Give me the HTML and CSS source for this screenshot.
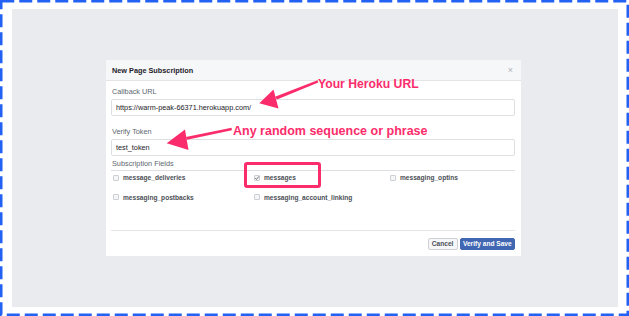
FILE: index.html
```html
<!DOCTYPE html>
<html>
<head>
<meta charset="utf-8">
<link rel="stylesheet" href="styles.css">
</head>
<body>
<div class="frame">
  <div class="stage">
    <div class="dialog">
      <div class="dlg-head">
        <span class="dlg-title">New Page Subscription</span>
        <span class="dlg-close">×</span>
      </div>
      <div class="dlg-body">
        <div class="field-label first">Callback URL</div>
        <div class="input">https://warm-peak-66371.herokuapp.com/</div>
        <div class="field-label">Verify Token</div>
        <div class="input">test_token</div>
        <div class="fields-head">Subscription Fields</div>
        <div class="fields">
          <div class="cb-row"><span class="cb"></span><span class="cb-text">message_deliveries</span></div>
          <div class="cb-row"><span class="cb checked"><svg viewBox="0 0 6 6" width="6" height="6"><path d="M1.2 3.1 L2.5 4.4 L4.9 1.4" fill="none" stroke="#4b4f56" stroke-width="0.8"/></svg></span><span class="cb-text">messages</span></div>
          <div class="cb-row"><span class="cb"></span><span class="cb-text">messaging_optins</span></div>
          <div class="cb-row"><span class="cb"></span><span class="cb-text">messaging_postbacks</span></div>
          <div class="cb-row"><span class="cb"></span><span class="cb-text">messaging_account_linking</span></div>
        </div>
      </div>
      <div class="dlg-foot">
        <button class="btn btn-cancel">Cancel</button>
        <button class="btn btn-primary">Verify and Save</button>
      </div>
    </div>
  </div>
  <svg class="overlay" width="629" height="316" viewBox="0 0 629 316">
    <rect x="1.25" y="1.25" width="626.5" height="313.5" fill="none" stroke="#2361f4" stroke-width="2.5" stroke-dasharray="13 5"/>
    <path d="M317.5 80.2 L318.3 82.6 L277 99.6 L275 96.8 Z" fill="#fb2c6b"/>
    <path d="M259.3 103.3 L273.5 89.5 L278.5 108.5 Z" fill="#fb2c6b"/>
    <path d="M231.5 127.8 L231.9 130.3 L187 139.8 L185.8 137 Z" fill="#fb2c6b"/>
    <path d="M166.7 143.2 L185 129.5 L188.5 150 Z" fill="#fb2c6b"/>
  </svg>
  <span class="note note-url">Your Heroku URL</span>
  <span class="note note-token">Any random sequence or phrase</span>
  <span class="highlight"></span>
</div>
</body>
</html>
```
FILE: styles.css
```css
html, body {
  margin: 0;
  padding: 0;
  background: #fff;
}
body {
  font-family: "Liberation Sans", Arial, sans-serif;
}
.frame {
  position: relative;
  width: 629px;
  height: 316px;
  box-sizing: border-box;
  padding: 9px 11px 9px 12px;
  background: #fff;
}
.stage {
  height: 100%;
  box-sizing: border-box;
  background: #e9ebee;
  padding: 51px 0 0 94px;
}
.dialog {
  width: 415px;
  height: 196px;
  background: #fff;
  display: flex;
  flex-direction: column;
}
.dlg-head {
  height: 20px;
  border-bottom: 1px solid #e5e5e5;
  background: #f6f7f9;
  display: flex;
  align-items: center;
  justify-content: space-between;
  padding: 0 8px 0 6px;
}
.dlg-title {
  font-weight: bold;
  font-size: 7.3px;
  color: #1d2129;
}
.dlg-close {
  font-size: 9px;
  color: #b0b3b8;
  line-height: 9px;
}
.dlg-body {
  flex: 1;
  padding: 0 6px 0 5px;
}
.field-label {
  font-size: 7.3px;
  line-height: 9px;
  color: #606770;
  padding-left: 1px;
  margin-top: 11px;
}
.field-label.first {
  margin-top: 6px;
}
.input {
  margin-top: 3px;
  height: 17px;
  box-sizing: border-box;
  border: 1px solid #dddfe2;
  border-radius: 2px;
  font-size: 7.3px;
  color: #1d2129;
  display: flex;
  align-items: center;
  padding-left: 4px;
}
.fields-head {
  margin-top: 3px;
  font-size: 7.3px;
  line-height: 9px;
  color: #606770;
  padding: 0 0 2px 1px;
  border-bottom: 1px solid #dddfe2;
}
.fields {
  margin-top: 2px;
  display: grid;
  grid-template-columns: 141px 136px 1fr;
  row-gap: 10.5px;
  padding-left: 2px;
}
.cb-row {
  display: flex;
  align-items: center;
  height: 9px;
}
.cb {
  width: 6px;
  height: 6px;
  box-sizing: border-box;
  border: 1px solid #ccd0d5;
  border-radius: 1px;
  background: #f5f6f7;
  margin-right: 4px;
  display: flex;
  align-items: center;
  justify-content: center;
  position: relative;
}
.cb svg {
  position: absolute;
  left: -1px;
  top: -1px;
}
.cb-text {
  font-weight: bold;
  font-size: 6.6px;
  color: #4b4f56;
}
.dlg-foot {
  margin: 0 6px 0 5px;
  border-top: 1px solid #e5e5e5;
  height: 25px;
  display: flex;
  justify-content: flex-end;
  align-items: flex-start;
  gap: 2px;
  padding-top: 6.7px;
  box-sizing: border-box;
  height: 26px;
}
.btn {
  height: 12.6px;
  box-sizing: border-box;
  border-radius: 2px;
  font-family: "Liberation Sans", Arial, sans-serif;
  font-weight: bold;
  font-size: 6.6px;
  padding: 0;
  display: flex;
  align-items: center;
  justify-content: center;
}
.btn-cancel {
  width: 30px;
  background: #f6f7f9;
  border: 1px solid #ced0d4;
  color: #4b4f56;
}
.btn-primary {
  width: 55.4px;
  background: #4267b2;
  border: 1px solid #4267b2;
  color: #fff;
}
.overlay {
  position: absolute;
  left: 0;
  top: 0;
}
.note {
  position: absolute;
  font-weight: bold;
  color: #fb2c6b;
  font-size: 12.2px;
  line-height: 14px;
  white-space: nowrap;
}
.note-url {
  left: 318px;
  top: 77px;
}
.note-token {
  left: 233px;
  top: 124px;
  font-size: 12.5px;
}
.highlight {
  position: absolute;
  left: 244px;
  top: 161.7px;
  width: 77px;
  height: 26px;
  box-sizing: border-box;
  border: 3px solid #fb2c6b;
  border-radius: 3px;
}
```
